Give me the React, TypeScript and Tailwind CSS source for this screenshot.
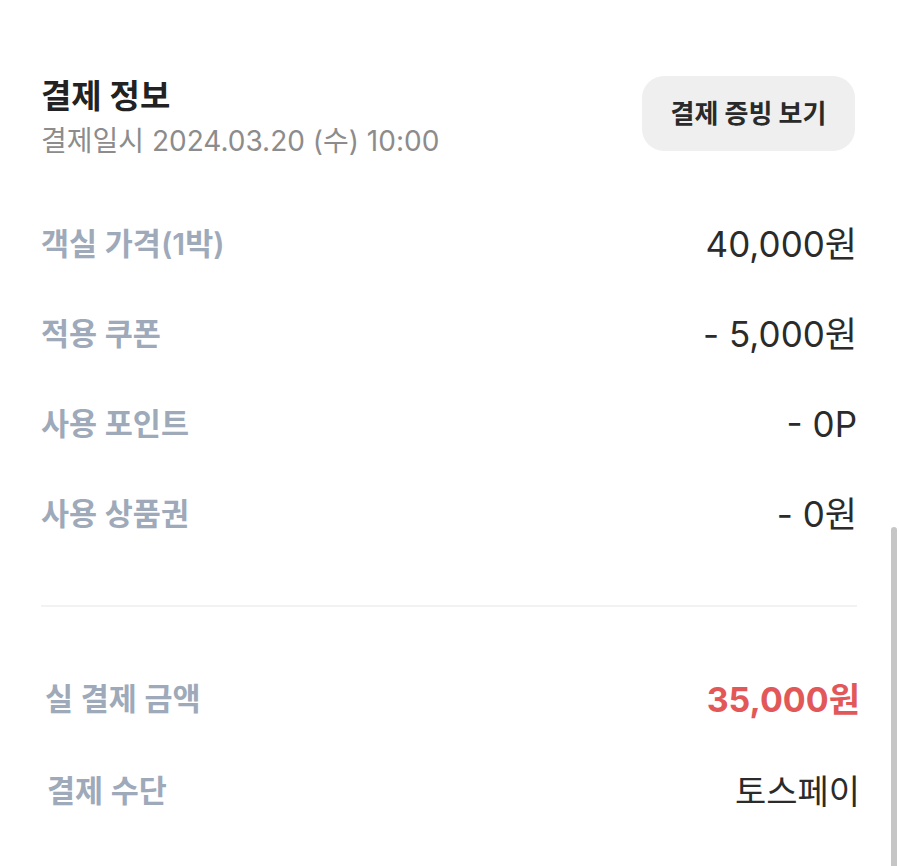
import React from "react";

const rows = [
  { label: "객실 가격(1박)", value: "40,000원" },
  { label: "적용 쿠폰", value: "- 5,000원" },
  { label: "사용 포인트", value: "- 0P" },
  { label: "사용 상품권", value: "- 0원" },
];

function Row({ label, value }: { label: string; value: string }) {
  return (
    <div className="flex h-[90px] items-center justify-between">
      <span className="text-[30.5px] font-semibold text-[#9ea9b9]">{label}</span>
      <span className="text-[35px] font-normal text-[#2b2b2b]">{value}</span>
    </div>
  );
}

export default function App() {
  return (
    <div
      className="relative h-[866px] w-full overflow-hidden bg-white"
      style={{ fontFamily: 'Inter, "Noto Sans CJK KR", sans-serif' }}
    >
      <div className="pl-[41px] pr-[43px]">
        {/* header */}
        <div className="flex items-start justify-between pt-[76px]">
          <div>
            <h2 className="text-[33px] font-bold leading-[40px] text-[#222]">결제 정보</h2>
            <p className="mt-[6px] text-[28px] leading-[38px] text-[#8c8c8c]">
              결제일시 2024.03.20 (수) 10:00
            </p>
          </div>
          <button className="mr-[2px] flex h-[75px] w-[213px] items-center justify-center rounded-[22px] bg-[#efefef] text-[26px] font-bold text-[#2a2a2a]">
            결제 증빙 보기
          </button>
        </div>

        {/* price rows */}
        <div className="mt-[39px]">
          {rows.map((r) => (
            <Row key={r.label} label={r.label} value={r.value} />
          ))}
        </div>

        <div className="mt-[46px] h-[2px] bg-[#f2f2f2]" />

        <div className="mt-[46px] -mr-[3px]">
          <div className="flex h-[92px] items-center justify-between pl-[4px]">
            <span className="text-[30.5px] font-semibold text-[#9ea9b9]">실 결제 금액</span>
            <span className="text-[34px] font-bold text-[#e25858]">35,000원</span>
          </div>
          <div className="flex h-[92px] items-center justify-between pl-[6px]">
            <span className="text-[30.5px] font-semibold text-[#9ea9b9]">결제 수단</span>
            <span className="text-[34px] text-[#2b2b2b]">토스페이</span>
          </div>
        </div>
      </div>

      {/* scrollbar */}
      <div className="absolute right-[3px] top-[527px] h-[360px] w-[6px] rounded-full bg-[#c6c6c6]" />
    </div>
  );
}
